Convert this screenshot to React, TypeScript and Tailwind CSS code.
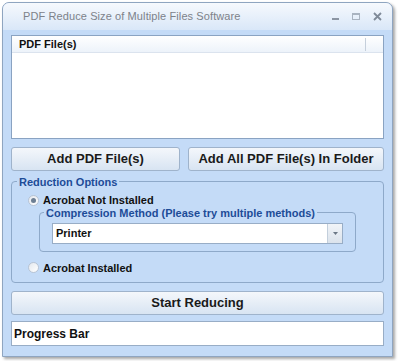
import React from "react";

const font = { fontFamily: '"Liberation Sans", Arial, sans-serif' };

function Radio({ checked }: { checked?: boolean }) {
  return (
    <span className="inline-flex items-center justify-center w-[11px] h-[11px] rounded-full border border-[#b8c4d4] bg-gradient-to-br from-[#e4e8ee] to-[#ffffff]">
      {checked && <span className="w-[5px] h-[5px] rounded-full bg-[#6d7f94]" />}
    </span>
  );
}

export default function App() {
  return (
    <div className="w-[400px] h-[361px] bg-white overflow-hidden" style={font}>
      <div className="ml-[2px] mt-[2px] w-[391px] h-[355px] rounded-t-[7px] border border-[#8fa5c0] bg-[#c4dbf7] shadow-[2px_2px_3px_rgba(0,0,0,0.35)] flex flex-col">
        {/* Title bar */}
        <div className="h-[27px] shrink-0 flex items-center rounded-t-[6px] bg-gradient-to-b from-[#f6f9fd] to-[#d9e7f8] pl-[20px] pr-[10px]">
          <span className="text-[11px] text-[#7d828a] tracking-[0.1px]">PDF Reduce Size of Multiple Files Software</span>
          <div className="ml-auto flex items-center gap-[13px] text-[#8b95a3]">
            <span className="w-[7px] h-[2px] bg-[#8b95a3] mt-[5px]" />
            <span className="w-[8px] h-[7px] border border-[#a9b3c0] border-t-[2px]" />
            <svg width="9" height="9" viewBox="0 0 9 9"><path d="M1 1L8 8M8 1L1 8" stroke="#7f8a98" strokeWidth="1.8" /></svg>
          </div>
        </div>
        <div className="flex-1 flex flex-col px-[8px] pt-[5px]">
          {/* List */}
          <div className="h-[104px] bg-white border border-[#8aa3c2] flex flex-col">
            <div className="h-[17px] border-b border-[#dbe3ee] bg-gradient-to-b from-[#ffffff] to-[#edf3fa] flex items-center">
              <span className="pl-[7px] text-[11px] font-bold text-[#111] w-[353px]">PDF File(s)</span>
              <span className="w-[1px] h-[13px] bg-[#c5cfdb]" />
            </div>
          </div>
          {/* Buttons */}
          <div className="flex gap-[8px] mt-[8px]">
            <button className="w-[169px] h-[24px] rounded-[3px] border border-[#9fb3cb] bg-gradient-to-b from-[#f4f7fb] to-[#d8e4f2] text-[13px] font-bold text-[#1a1a1a]">Add PDF File(s)</button>
            <button className="flex-1 h-[24px] rounded-[3px] border border-[#9fb3cb] bg-gradient-to-b from-[#f4f7fb] to-[#d8e4f2] text-[13px] font-bold text-[#1a1a1a]">Add All PDF File(s) In Folder</button>
          </div>
          {/* Reduction options */}
          <div className="relative mt-[10px] h-[102px] rounded-[4px] border border-[#8ea9c9] pl-[16px] pr-[27px]">
            <span className="absolute left-[5px] top-[-8px] bg-[#c4dbf7] px-[2px] text-[11px] font-bold text-[#1d4c97]">Reduction Options</span>
            <div className="flex items-center gap-[4px] mt-[10px]">
              <Radio checked />
              <span className="text-[11px] font-bold text-[#111]">Acrobat Not Installed</span>
            </div>
            <div className="relative mt-[3px] ml-[11px] h-[40px] rounded-[4px] border border-[#8ea9c9] px-[12px] pt-[10px]">
              <span className="absolute left-[4px] top-[-8px] bg-[#c4dbf7] px-[2px] text-[11px] font-bold text-[#1d4c97]">Compression Method (Please try multiple methods)</span>
              <div className="h-[21px] bg-white border border-[#98adc6] flex items-center">
                <span className="pl-[3px] text-[11px] font-bold text-[#111] flex-1">Printer</span>
                <span className="w-[15px] h-[19px] bg-gradient-to-b from-[#f1f4f8] to-[#dbe3ec] border-l border-[#c3cfdc] flex items-center justify-center">
                  <svg width="5" height="3" viewBox="0 0 5 3"><path d="M0 0H5L2.5 3Z" fill="#6b7785" /></svg>
                </span>
              </div>
            </div>
            <div className="flex items-center gap-[4px] mt-[8px]">
              <Radio />
              <span className="text-[11px] font-bold text-[#111]">Acrobat Installed</span>
            </div>
          </div>
          <button className="mt-[8px] h-[24px] rounded-[3px] border border-[#9fb3cb] bg-gradient-to-b from-[#f4f7fb] to-[#d8e4f2] text-[13px] font-bold text-[#1a1a1a]">Start Reducing</button>
          <div className="mt-[6px] h-[25px] bg-white border border-[#98adc6] flex items-center">
            <span className="pl-[2px] text-[12px] font-bold text-[#111]">Progress Bar</span>
          </div>
        </div>
      </div>
    </div>
  );
}
